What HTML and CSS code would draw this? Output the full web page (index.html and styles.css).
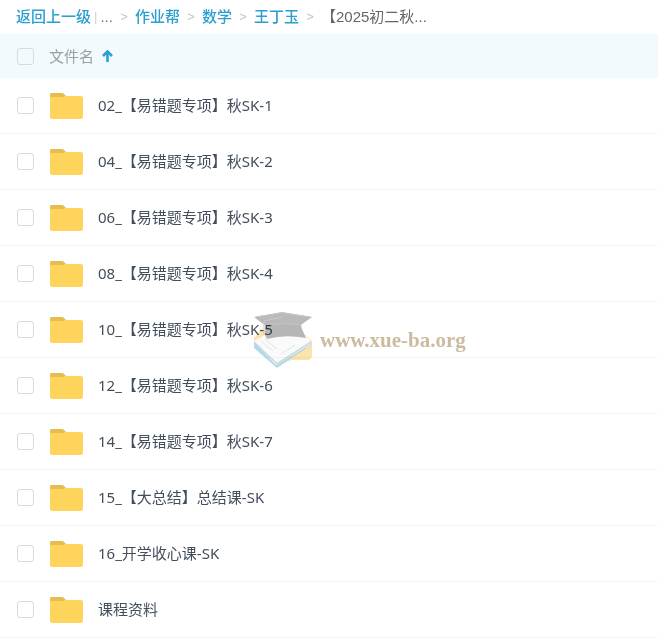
FILE: index.html
```html
<!DOCTYPE html>
<html lang="zh-CN">
<head>
    <meta charset="UTF-8">
    <meta name="viewport" content="width=device-width, initial-scale=1.0">
    <title>文件列表</title>
    <link rel="stylesheet" href="styles.css">
</head>
<body>
    <svg width="0" height="0" class="sprite" aria-hidden="true">
        <symbol id="folder" viewBox="0 0 34 28">
            <path d="M1 9V2.500Q1 1 2.500 1H13Q14 1 15 2L17 4V9Z" fill="#e6bd4c"/>
            <path d="M1 5H14L16 4H32Q34 4 34 6V25Q34 27 32 27H3Q1 27 1 25Z" fill="#ffd45c"/>
        </symbol>
    </svg>

    <nav class="breadcrumb">
        <a href="#">返回上一级</a>
        <span class="divider">|</span>
        <span class="more">...</span>
        <span class="arrow">&gt;</span>
        <a href="#">作业帮</a>
        <span class="arrow">&gt;</span>
        <a href="#">数学</a>
        <span class="arrow">&gt;</span>
        <a href="#">王丁玉</a>
        <span class="arrow">&gt;</span>
        <span class="current">【2025初二秋...</span>
    </nav>

    <main class="files">
        <div class="list-header">
            <input type="checkbox" id="all" class="check">
            <label for="all">文件名</label>
            <svg class="sort" width="11" height="12" viewBox="0 0 11 12" aria-hidden="true">
                <path d="M5.500 12V2M1 6L5.500 1.500L10 6" fill="none" stroke="#2a9fd8" stroke-width="2.600"/>
            </svg>
        </div>

        <ul class="list">
            <li class="row">
                <input type="checkbox" id="f1" class="check">
                <svg class="folder" aria-hidden="true"><use href="#folder"/></svg>
                <label for="f1">02_【易错题专项】秋SK-1</label>
            </li>
            <li class="row">
                <input type="checkbox" id="f2" class="check">
                <svg class="folder" aria-hidden="true"><use href="#folder"/></svg>
                <label for="f2">04_【易错题专项】秋SK-2</label>
            </li>
            <li class="row">
                <input type="checkbox" id="f3" class="check">
                <svg class="folder" aria-hidden="true"><use href="#folder"/></svg>
                <label for="f3">06_【易错题专项】秋SK-3</label>
            </li>
            <li class="row">
                <input type="checkbox" id="f4" class="check">
                <svg class="folder" aria-hidden="true"><use href="#folder"/></svg>
                <label for="f4">08_【易错题专项】秋SK-4</label>
            </li>
            <li class="row">
                <input type="checkbox" id="f5" class="check">
                <svg class="folder" aria-hidden="true"><use href="#folder"/></svg>
                <label for="f5">10_【易错题专项】秋SK-5</label>
            </li>
            <li class="row">
                <input type="checkbox" id="f6" class="check">
                <svg class="folder" aria-hidden="true"><use href="#folder"/></svg>
                <label for="f6">12_【易错题专项】秋SK-6</label>
            </li>
            <li class="row">
                <input type="checkbox" id="f7" class="check">
                <svg class="folder" aria-hidden="true"><use href="#folder"/></svg>
                <label for="f7">14_【易错题专项】秋SK-7</label>
            </li>
            <li class="row">
                <input type="checkbox" id="f8" class="check">
                <svg class="folder" aria-hidden="true"><use href="#folder"/></svg>
                <label for="f8">15_【大总结】总结课-SK</label>
            </li>
            <li class="row">
                <input type="checkbox" id="f9" class="check">
                <svg class="folder" aria-hidden="true"><use href="#folder"/></svg>
                <label for="f9">16_开学收心课-SK</label>
            </li>
            <li class="row">
                <input type="checkbox" id="f10" class="check">
                <svg class="folder" aria-hidden="true"><use href="#folder"/></svg>
                <label for="f10">课程资料</label>
            </li>
        </ul>

        <!-- site watermark over the list -->
        <div class="watermark">
            <svg width="62" height="60" viewBox="0 0 62 60" aria-hidden="true">
                <path d="M2 28L10 19L54 25L60 31V47L57 50L40 50L24 55L2 37Z" fill="#fce3ae"/>
                <path d="M2 31L25 52L59 31V35L25 58L2 38Z" fill="#b3dcea"/>
                <path d="M2 31L24 56L58 35L59 31L25 50Z" fill="#e3e8ea"/>
                <path d="M2 31L15 24L52 24L59 31L25 53Z" fill="#fafafa"/>
                <path d="M3 33L25 53.500L59 32M3 36L24 56L54 38" fill="none" stroke="#bdd3da"/>
                <path d="M9 31L21 41M13 29L25 39M29 44L43 35" fill="none" stroke="#e2e4e5"/>
                <path d="M14 12L48 11L50 19L54 28Q33 24 15 29L13 25Z" fill="#b6b6b6"/>
                <path d="M2 7L30 2L60 7L49 15Q32 12 14 16Z" fill="#bababa"/>
                <path d="M4 7L30 3L58 7M49 15Q32 12 15 16" fill="none" stroke="#c4c4c4"/>
                <path d="M30 7L12 11V25" fill="none" stroke="#c8c8c8"/>
            </svg>
            <span>www.xue-ba.org</span>
        </div>
    </main>
</body>
</html>
```
FILE: styles.css
```css
* {
    box-sizing: border-box;
}
body {
    margin: 0;
    background-color: #fff;
    color: #424e5c;
    font-family: "Noto Sans", "Noto Sans CJK SC", sans-serif;
    font-size: 15px;
    line-height: 20px;
}
.sprite {
    position: absolute;
}
.breadcrumb {
    display: flex;
    align-items: center;
    height: 34px;
    padding: 0 16px;
    font-family: "Liberation Sans", "Noto Sans CJK SC", sans-serif;
    white-space: nowrap;
}
.breadcrumb a {
    color: #2a9fd0;
    font-weight: 500;
    text-decoration: none;
}
.divider {
    margin: 0 3px;
    color: #c8d4da;
    font-size: 13px;
}
.more {
    color: #777;
}
.arrow {
    width: 22px;
    color: #c4c4c4;
    font-size: 13px;
    text-align: center;
}
.current {
    color: #666;
}
.files {
    position: relative;
}
.list-header {
    display: flex;
    align-items: center;
    height: 44px;
    padding: 0 17px;
    background-color: #f2fafe;
    color: #98a0a6;
}
.check {
    appearance: none;
    flex: none;
    width: 17px;
    height: 17px;
    margin: 0 15px 0 0;
    border: 1px solid #d5dadd;
    border-radius: 3px;
    background-color: #fff;
}
.list-header .check {
    background-color: transparent;
}
.check:checked {
    background-color: #2a9fd0;
}
.sort {
    margin-left: 8px;
}
.list {
    margin: 0;
    padding: 0;
    list-style: none;
}
.row {
    display: flex;
    align-items: center;
    height: 56px;
    padding: 0 17px;
    border-bottom: 1px solid #f3f5f6;
}
.row label {
    padding-bottom: 2px;
}
.folder {
    width: 34px;
    height: 28px;
    margin-right: 15px;
}
.watermark {
    position: absolute;
    top: 276px;
    left: 252px;
    display: flex;
    align-items: center;
    gap: 6px;
    color: #cbbba0;
    font-family: "Liberation Serif", serif;
    font-size: 21px;
    font-weight: bold;
    pointer-events: none;
    mix-blend-mode: multiply;
}
```
